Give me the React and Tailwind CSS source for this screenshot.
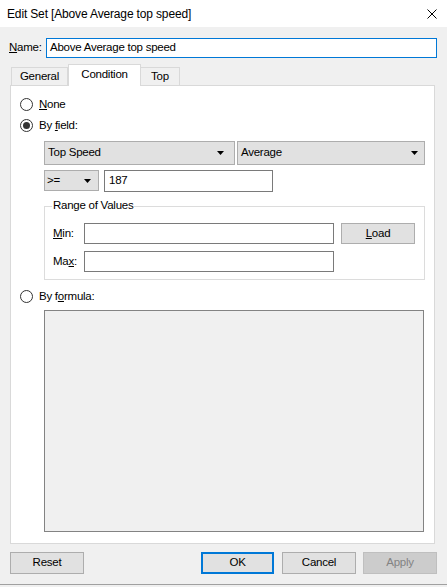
import React from "react";

function Radio({ checked }) {
  return (
    <svg width="13" height="13" viewBox="0 0 13 13" className="shrink-0">
      <circle cx="6.5" cy="6.5" r="6" fill="#ffffff" stroke="#333333" strokeWidth="1" />
      {checked && <circle cx="6.5" cy="6.5" r="3.5" fill="#333333" />}
    </svg>
  );
}

function Arrow() {
  return (
    <svg width="7" height="4" viewBox="0 0 7 4" className="shrink-0">
      <polygon points="0,0 7,0 3.5,4" fill="#000000" />
    </svg>
  );
}

export default function App() {
  return (
    <div className="w-[447px] h-[587px] bg-[#f0f0f0] flex flex-col overflow-hidden text-[11.5px] tracking-[-0.25px] text-black font-['Liberation_Sans',Arial,sans-serif] leading-none">
      {/* Title bar */}
      <div className="h-[27px] shrink-0 bg-white flex items-center justify-between pl-[7px] pr-[10px]">
        <span className="text-[12px] tracking-[-0.15px]">Edit Set [Above Average top speed]</span>
        <svg width="10" height="10" viewBox="0 0 10 10">
          <path d="M0.5 0.5 L9.5 9.5 M9.5 0.5 L0.5 9.5" stroke="#000" strokeWidth="1" />
        </svg>
      </div>

      {/* Name row */}
      <div className="flex items-center mt-[11px] pl-[9px] h-[20px] shrink-0">
        <span className="w-[37px]">
          <u>N</u>ame:
        </span>
        <div className="w-[391px] h-[20px] border border-[#0078d7] bg-white pl-[3px] flex items-center">
          Above Average top speed
        </div>
      </div>

      {/* Tabs */}
      <div className="flex items-end mt-[6px] pl-[11px] h-[21px] shrink-0">
        <div className="w-[57px] h-[18px] border border-b-0 border-[#d9d9d9] bg-[#f0f0f0] flex items-center justify-center pt-[1px]">
          General
        </div>
        <div className="relative z-10 -mb-px w-[73px] h-[22px] border border-b-0 border-[#d9d9d9] bg-white flex items-center justify-center pb-[2px]">
          Condition
        </div>
        <div className="w-[39px] h-[18px] border border-b-0 border-l-0 border-[#d9d9d9] bg-[#f0f0f0] flex items-center justify-center pt-[1px]">
          Top
        </div>
      </div>

      {/* Panel */}
      <div className="ml-[10px] w-[425px] h-[459px] shrink-0 border border-[#d9d9d9] bg-white flex flex-col">
        <div className="flex items-center mt-[12px] ml-[9px] h-[13px]">
          <Radio />
          <span className="ml-[6px]">
            <u>N</u>one
          </span>
        </div>
        <div className="flex items-center mt-[8px] ml-[9px] h-[13px]">
          <Radio checked />
          <span className="ml-[6px]">
            By <u>f</u>ield:
          </span>
        </div>

        {/* Dropdowns */}
        <div className="flex mt-[9px] ml-[33px] gap-[2px]">
          <div className="w-[191px] h-[24px] border border-[#adadad] bg-[#e1e1e1] flex items-center justify-between pl-[3px] pr-[10px]">
            <span>Top Speed</span>
            <Arrow />
          </div>
          <div className="w-[188px] h-[24px] border border-[#adadad] bg-[#e1e1e1] flex items-center justify-between pl-[3px] pr-[6px]">
            <span>Average</span>
            <Arrow />
          </div>
        </div>

        <div className="flex items-start mt-[5px] ml-[33px]">
          <div className="w-[55px] h-[21px] border border-[#adadad] bg-[#e1e1e1] flex items-center justify-between pl-[2px] pr-[7px]">
            <span>&gt;=</span>
            <Arrow />
          </div>
          <div className="ml-[5px] w-[169px] h-[22px] border border-[#7a7a7a] bg-white flex items-center pl-[4px]">
            187
          </div>
        </div>

        {/* Range group */}
        <div className="relative mt-[14px] ml-[33px] w-[381px] h-[74px] border border-[#dcdcdc] flex flex-col">
          <span className="absolute -top-[7px] left-[7px] bg-white px-[1px]">Range of Values</span>
          <div className="flex items-center mt-[16px] pl-[8px]">
            <span className="w-[31px]">
              <u>M</u>in:
            </span>
            <div className="w-[250px] h-[21px] border border-[#7a7a7a] bg-white" />
            <div className="ml-[7px] w-[74px] h-[21px] border border-[#adadad] bg-[#e1e1e1] flex items-center justify-center">
              <span>
                <u>L</u>oad
              </span>
            </div>
          </div>
          <div className="flex items-center mt-[7px] pl-[8px]">
            <span className="w-[31px]">
              Ma<u>x</u>:
            </span>
            <div className="w-[250px] h-[21px] border border-[#7a7a7a] bg-white" />
          </div>
        </div>

        <div className="flex items-center mt-[10px] ml-[9px] h-[13px]">
          <Radio />
          <span className="ml-[6px]">
            By f<u>o</u>rmula:
          </span>
        </div>

        <div className="mt-[7px] ml-[33px] w-[380px] h-[222px] border border-[#838383] bg-[#f0f0f0]" />
      </div>

      {/* Buttons */}
      <div className="flex items-start mt-[8px] pl-[10px] pr-[10px] shrink-0">
        <div className="w-[74px] h-[22px] border border-[#adadad] bg-[#e1e1e1] flex items-center justify-center">
          Reset
        </div>
        <div className="flex-1" />
        <div className="w-[73px] h-[22px] border-2 border-[#0078d7] bg-[#e1e1e1] flex items-center justify-center">
          OK
        </div>
        <div className="ml-[8px] w-[74px] h-[22px] border border-[#adadad] bg-[#e1e1e1] flex items-center justify-center">
          Cancel
        </div>
        <div className="ml-[7px] w-[74px] h-[22px] border border-[#bfbfbf] bg-[#cccccc] text-[#838383] flex items-center justify-center">
          Apply
        </div>
      </div>

      <div className="mt-auto mb-[2px] h-px bg-[#a0a0a0] shrink-0" />
    </div>
  );
}
